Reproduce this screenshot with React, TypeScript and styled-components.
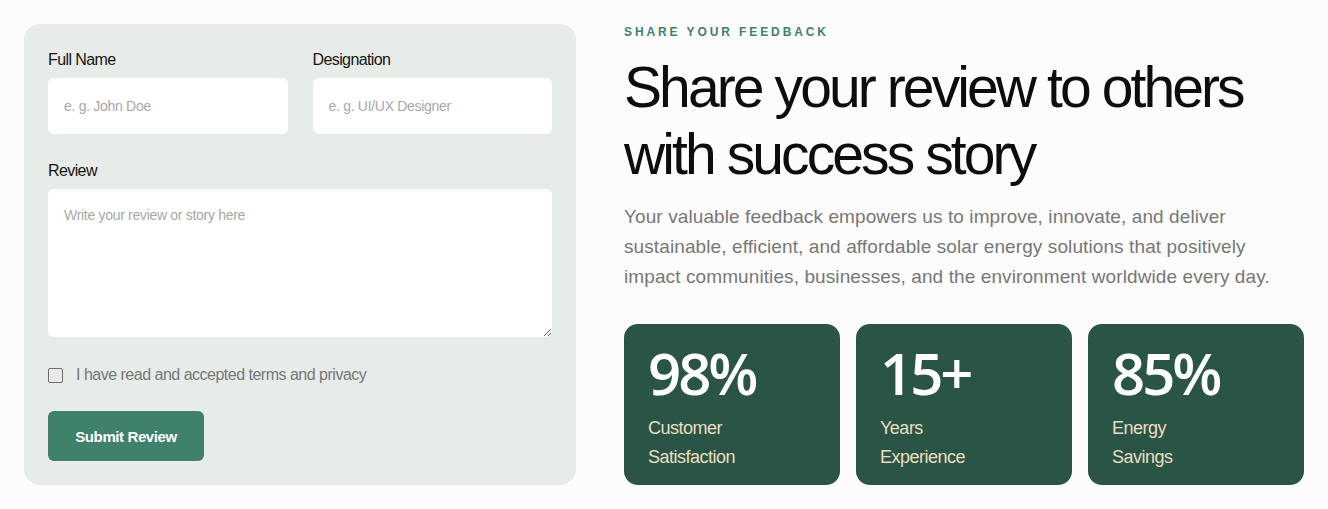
import React, { useState } from "react";
import styled, { createGlobalStyle } from "styled-components";

const GlobalStyle = createGlobalStyle`
  * { box-sizing: border-box; }
  body {
    margin: 0;
    background: #fcfcfc;
    font-family: "Liberation Sans", Arial, sans-serif;
    color: #111;
  }
`;

interface Stat {
  value: string;
  label: string[];
}

const stats: Stat[] = [
  { value: "98%", label: ["Customer", "Satisfaction"] },
  { value: "15+", label: ["Years", "Experience"] },
  { value: "85%", label: ["Energy", "Savings"] },
];

const App: React.FC = () => {
  const [name, setName] = useState("");
  const [designation, setDesignation] = useState("");
  const [review, setReview] = useState("");
  const [agreed, setAgreed] = useState(false);

  return (
    <>
      <GlobalStyle />
      <StyledPage>
        <StyledForm onSubmit={(e) => e.preventDefault()}>
          <StyledRow>
            <StyledField>
              <StyledLabel>Full Name</StyledLabel>
              <StyledInput
                placeholder="e. g. John Doe"
                value={name}
                onChange={(e) => setName(e.target.value)}
              />
            </StyledField>
            <StyledField>
              <StyledLabel>Designation</StyledLabel>
              <StyledInput
                placeholder="e. g. UI/UX Designer"
                value={designation}
                onChange={(e) => setDesignation(e.target.value)}
              />
            </StyledField>
          </StyledRow>
          <StyledField $offset={3}>
            <StyledLabel>Review</StyledLabel>
            <StyledTextarea
              placeholder="Write your review or story here"
              value={review}
              onChange={(e) => setReview(e.target.value)}
            />
          </StyledField>
          <StyledCheckRow>
            <StyledCheckbox
              type="checkbox"
              checked={agreed}
              onChange={() => setAgreed(!agreed)}
            />
            I have read and accepted terms and privacy
          </StyledCheckRow>
          <StyledButton type="submit">Submit Review</StyledButton>
        </StyledForm>

        <StyledIntro>
          <StyledEyebrow>Share your feedback</StyledEyebrow>
          <StyledHeading>
            Share your review to others
            <br />
            with success story
          </StyledHeading>
          <StyledText>
            Your valuable feedback empowers us to improve, innovate, and deliver
            sustainable, efficient, and affordable solar energy solutions that
            positively impact communities, businesses, and the environment
            worldwide every day.
          </StyledText>
          <StyledStats>
            {stats.map((stat) => (
              <StyledStatCard key={stat.value}>
                <StyledStatValue>{stat.value}</StyledStatValue>
                <StyledStatLabel>
                  {stat.label[0]}
                  <br />
                  {stat.label[1]}
                </StyledStatLabel>
              </StyledStatCard>
            ))}
          </StyledStats>
        </StyledIntro>
      </StyledPage>
    </>
  );
};

const StyledPage = styled.div`
  display: flex;
  gap: 48px;
  padding: 24px;
  width: 1328px;
  align-items: flex-start;
`;

const StyledForm = styled.form`
  width: 552px;
  flex-shrink: 0;
  background: #e8ece9;
  border-radius: 16px;
  padding: 26px 24px 24px;
  display: flex;
  flex-direction: column;
  gap: 24px;
`;

const StyledRow = styled.div`
  display: grid;
  grid-template-columns: 1fr 1fr;
  gap: 25px;
`;

const StyledField = styled.div<{ $offset?: number }>`
  display: flex;
  flex-direction: column;
  gap: 9px;
  margin-top: ${(p) => p.$offset ?? 0}px;
`;

const StyledLabel = styled.label`
  font-size: 16px;
  letter-spacing: -0.6px;
  line-height: 19px;
  color: #151515;
`;

const StyledInput = styled.input`
  height: 56px;
  border: none;
  border-radius: 6px;
  background: #fff;
  padding: 0 16px;
  font-family: inherit;
  font-size: 14px;
  letter-spacing: -0.3px;
  outline: none;
  &::placeholder {
    color: #a8a8a8;
  }
`;

const StyledTextarea = styled.textarea`
  height: 148px;
  border: none;
  border-radius: 6px;
  background: #fff;
  padding: 18px 16px;
  font-family: inherit;
  font-size: 14px;
  letter-spacing: -0.3px;
  outline: none;
  resize: vertical;
  &::placeholder {
    color: #a8a8a8;
  }
`;

const StyledCheckRow = styled.label`
  display: flex;
  align-items: center;
  gap: 13px;
  margin-top: 5px;
  font-size: 16px;
  letter-spacing: -0.5px;
  color: #777;
`;

const StyledCheckbox = styled.input`
  appearance: none;
  width: 15px;
  height: 15px;
  margin: 0;
  border: 1.5px solid #6d6d6d;
  border-radius: 2px;
  background: transparent;
  &:checked {
    background: #3f816b;
    border-color: #3f816b;
  }
`;

const StyledButton = styled.button`
  width: 156px;
  height: 50px;
  margin-top: 3px;
  border: none;
  border-radius: 6px;
  background: #3f816b;
  color: #fff;
  font-family: inherit;
  font-weight: 700;
  font-size: 15px;
  letter-spacing: -0.4px;
  cursor: pointer;
`;

const StyledIntro = styled.div`
  flex: 1;
  display: flex;
  flex-direction: column;
`;

const StyledEyebrow = styled.div`
  margin-top: 1px;
  font-size: 12px;
  font-weight: 700;
  letter-spacing: 2.9px;
  text-transform: uppercase;
  color: #3f816b;
  line-height: 14px;
`;

const StyledHeading = styled.h1`
  margin: 15px 0 0;
  font-size: 57px;
  font-weight: 400;
  line-height: 67px;
  letter-spacing: -2.9px;
  color: #0d0d0d;
`;

const StyledText = styled.p`
  margin: 14px 0 0;
  font-size: 19px;
  line-height: 30px;
  letter-spacing: 0.1px;
  color: #777;
  max-width: 656px;
`;

const StyledStats = styled.div`
  display: grid;
  grid-template-columns: repeat(3, 216px);
  gap: 16px;
  margin-top: 32px;
`;

const StyledStatCard = styled.div`
  height: 161px;
  border-radius: 14px;
  background: #2a5446;
  padding: 16px 24px;
`;

const StyledStatValue = styled.div`
  font-family: "Open Sans", sans-serif;
  font-weight: 600;
  font-size: 58px;
  letter-spacing: -3px;
  line-height: 66px;
  color: #fff;
`;

const StyledStatLabel = styled.div`
  margin-top: 8px;
  font-size: 18px;
  line-height: 29px;
  letter-spacing: -0.5px;
  color: #e9dfbf;
`;

export default App;
